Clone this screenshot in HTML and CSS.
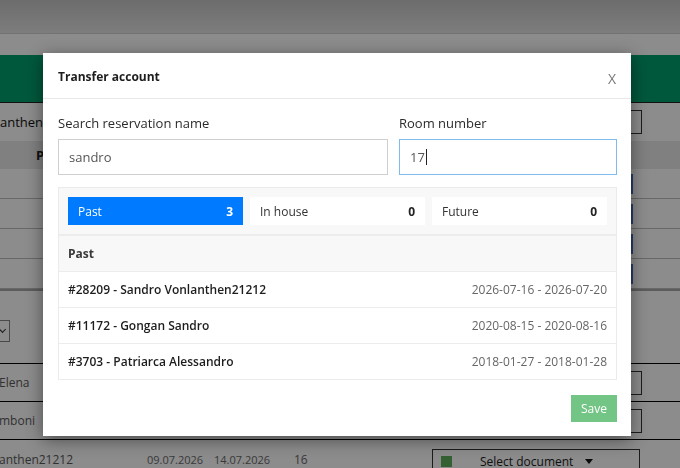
FILE: index.html
```html
<!DOCTYPE html>
<html lang="en">
<head>
  <meta charset="UTF-8">
  <meta name="viewport" content="width=device-width, initial-scale=1.0">
  <title>Transfer account</title>
  <link rel="stylesheet" href="styles.css">
</head>
<body>
  <!-- Page behind the dialog -->
  <div class="page">
    <div class="topbar"></div>
    <div class="subbar"></div>
    <div class="greenbar"></div>
    <div class="toolbar">
      <span class="guest-name">anthen</span>
      <span class="tool-box"></span>
    </div>
    <div class="thead">
      <span class="th-first">P</span>
    </div>
    <div class="trow"><span class="row-btn"></span></div>
    <div class="trow"><span class="row-btn"></span></div>
    <div class="trow"><span class="row-btn"></span></div>
    <div class="trow"><span class="row-btn"></span></div>
    <div class="filter-row">
      <span class="filter-select"><span class="chev"></span></span>
    </div>
    <div class="brow">
      <span class="b-name">Elena</span>
      <span class="b-box"></span>
    </div>
    <div class="brow">
      <span class="b-name">mboni</span>
      <span class="b-box"></span>
    </div>
    <div class="brow last">
      <span class="b-name">anthen21212</span>
      <span class="b-date">09.07.2026</span>
      <span class="b-date">14.07.2026</span>
      <span class="b-room">16</span>
      <span class="doc-select">
        <span class="doc-dot"></span>
        <span>Select document</span>
        <span class="caret"></span>
      </span>
    </div>
  </div>

  <div class="overlay"></div>

  <!-- Dialog -->
  <div class="modal">
    <div class="modal-header">
      <h4>Transfer account</h4>
      <span class="close">X</span>
    </div>
    <div class="modal-body">
      <div class="form-row">
        <div class="field">
          <label>Search reservation name</label>
          <div class="input">sandro</div>
        </div>
        <div class="field">
          <label>Room number</label>
          <div class="input focus">17<span class="cursor"></span></div>
        </div>
      </div>

      <div class="results">
        <div class="tabs">
          <div class="tab active"><span>Past</span><b>3</b></div>
          <div class="tab"><span>In house</span><b>0</b></div>
          <div class="tab"><span>Future</span><b>0</b></div>
        </div>
        <div class="list-head">Past</div>
        <div class="list-row">
          <span class="res-name">#28209 - Sandro Vonlanthen21212</span>
          <span class="res-date">2026-07-16 - 2026-07-20</span>
        </div>
        <div class="list-row">
          <span class="res-name">#11172 - Gongan Sandro</span>
          <span class="res-date">2020-08-15 - 2020-08-16</span>
        </div>
        <div class="list-row">
          <span class="res-name">#3703 - Patriarca Alessandro</span>
          <span class="res-date">2018-01-27 - 2018-01-28</span>
        </div>
      </div>
    </div>
    <div class="modal-footer">
      <button class="btn-save">Save</button>
    </div>
  </div>
</body>
</html>
```

FILE: styles.css
```css
  body {
    margin: 0;
    font-family: "Open Sans", Arial, sans-serif;
    font-size: 12px;
    color: #333;
    overflow: hidden;
  }

  /* background page */
  .page {
    width: 680px;
    height: 468px;
    background-color: #fff;
  }
  .topbar {
    height: 33px;
    background: linear-gradient(#c6c6c6, #e4e4e4);
    border-bottom: 1px solid #d2d2d2;
  }
  .subbar {
    height: 21px;
  }
  .greenbar {
    height: 47px;
    background-color: #00a06d;
    border-bottom: 1px solid #222;
  }
  .toolbar {
    height: 38px;
    display: flex;
    align-items: center;
    justify-content: space-between;
  }
  .guest-name {
    font-size: 13px;
    color: #111;
  }
  .tool-box {
    width: 30px;
    height: 22px;
    border: 1px solid #333;
    margin-right: 38px;
  }
  .thead {
    height: 28px;
    background-color: #e9e9e9;
    display: flex;
    align-items: center;
  }
  .th-first {
    margin-left: 36px;
    font-weight: bold;
    font-size: 13px;
    color: #222;
  }
  .trow {
    height: 29px;
    border-bottom: 1px solid #bdbdbd;
    display: flex;
    align-items: center;
    justify-content: flex-end;
  }
  .row-btn {
    width: 14px;
    height: 20px;
    background-color: #4a6fc0;
    margin-right: 47px;
  }
  .filter-row {
    height: 72px;
    border-top: 2px solid #a8a8a8;
    display: flex;
    align-items: center;
  }
  .filter-select {
    width: 24px;
    height: 20px;
    margin-left: -20px;
    margin-top: 8px;
    border: 1px solid #888;
    display: flex;
    align-items: center;
    justify-content: flex-end;
    padding-right: 4px;
  }
  .chev {
    width: 4px;
    height: 4px;
    border-right: 1px solid #333;
    border-bottom: 1px solid #333;
    transform: rotate(45deg);
    margin-bottom: 3px;
  }
  .brow {
    height: 37px;
    border-top: 1px solid #000;
    display: flex;
    align-items: center;
    font-size: 12px;
    color: #5a5a5a;
  }
  .brow .b-box {
    margin-left: auto;
    margin-right: 38px;
    width: 30px;
    height: 22px;
    border: 1px solid #333;
  }
  .brow.last {
    height: 30px;
    align-items: flex-start;
    padding-top: 11px;
    box-sizing: border-box;
  }
  .b-name {
    width: 148px;
    margin-left: -1px;
  }
  .b-date {
    width: 67px;
    font-size: 11px;
    line-height: 17px;
    color: #6a6a6a;
  }
  .b-room {
    margin-left: 13px;
    width: 138px;
    color: #6a6a6a;
  }
  .doc-select {
    width: 208px;
    height: 24px;
    margin-top: -2px;
    border: 1px solid #333;
    display: flex;
    align-items: center;
    gap: 28px;
    padding-left: 8px;
    box-sizing: border-box;
    color: #222;
  }
  .doc-dot {
    width: 11px;
    height: 11px;
    background-color: #5fb060;
  }
  .caret {
    width: 0;
    height: 0;
    margin-left: -16px;
    border-left: 4px solid transparent;
    border-right: 4px solid transparent;
    border-top: 5px solid #111;
  }

  .overlay {
    position: fixed;
    inset: 0;
    background-color: rgba(0, 0, 0, 0.45);
  }

  /* dialog */
  .modal {
    position: absolute;
    left: 43px;
    top: 53px;
    width: 588px;
    background-color: #fff;
    box-shadow: 0 4px 16px rgba(0, 0, 0, 0.45);
  }
  .modal-header {
    height: 45px;
    border-bottom: 1px solid #e9e9e9;
    display: flex;
    align-items: center;
    justify-content: space-between;
    padding: 0 15px;
  }
  .modal-header h4 {
    margin: 2px 0 0 0;
    font-size: 12px;
    font-weight: bold;
    color: #1d1d1d;
  }
  .close {
    font-size: 14px;
    color: #777;
    margin-top: 6px;
  }
  .modal-body {
    padding: 15px 14px 0 15px;
  }
  .form-row {
    display: grid;
    grid-template-columns: 330px 1fr;
    gap: 11px;
  }
  .field label {
    display: block;
    font-size: 13px;
    line-height: 18px;
    margin-bottom: 7px;
    color: #2b2b2b;
  }
  .input {
    height: 36px;
    border: 1px solid #cfcfcf;
    box-sizing: border-box;
    padding-left: 10px;
    display: flex;
    align-items: center;
    font-size: 13px;
    color: #555;
  }
  .input.focus {
    border-color: #80bbf0;
  }
  .cursor {
    width: 1px;
    height: 16px;
    background-color: #222;
    margin-left: 1px;
  }

  .results {
    margin-top: 12px;
    border: 1px solid #ebebeb;
  }
  .tabs {
    display: grid;
    grid-template-columns: 1fr 1fr 1fr;
    gap: 7px;
    padding: 9px;
    background-color: #f8f8f8;
    border-bottom: 2px solid #ececec;
  }
  .tab {
    height: 28px;
    background-color: #fff;
    display: flex;
    align-items: center;
    justify-content: space-between;
    padding: 0 10px;
    color: #333;
  }
  .tab b {
    font-size: 12px;
    color: #222;
  }
  .tab.active {
    background-color: #007bff;
    color: #fff;
  }
  .tab.active b {
    color: #fff;
  }
  .list-head {
    height: 35px;
    background-color: #f8f8f8;
    border-bottom: 1px solid #ececec;
    display: flex;
    align-items: center;
    padding: 0 9px;
    font-weight: bold;
    color: #3a3a3a;
  }
  .list-row {
    height: 35px;
    border-bottom: 1px solid #ececec;
    display: flex;
    align-items: center;
    justify-content: space-between;
    padding: 0 9px;
  }
  .list-row:last-child {
    border-bottom: none;
  }
  .res-name {
    font-weight: 600;
    color: #1d1d1d;
  }
  .res-date {
    color: #666;
  }

  .modal-footer {
    display: flex;
    justify-content: flex-end;
    padding: 15px 14px 14px 15px;
  }
  .btn-save {
    height: 27px;
    width: 46px;
    border: none;
    background-color: #73c586;
    color: #fff;
    font-family: "Open Sans", Arial, sans-serif;
    font-size: 12px;
    padding: 0;
  }
```
